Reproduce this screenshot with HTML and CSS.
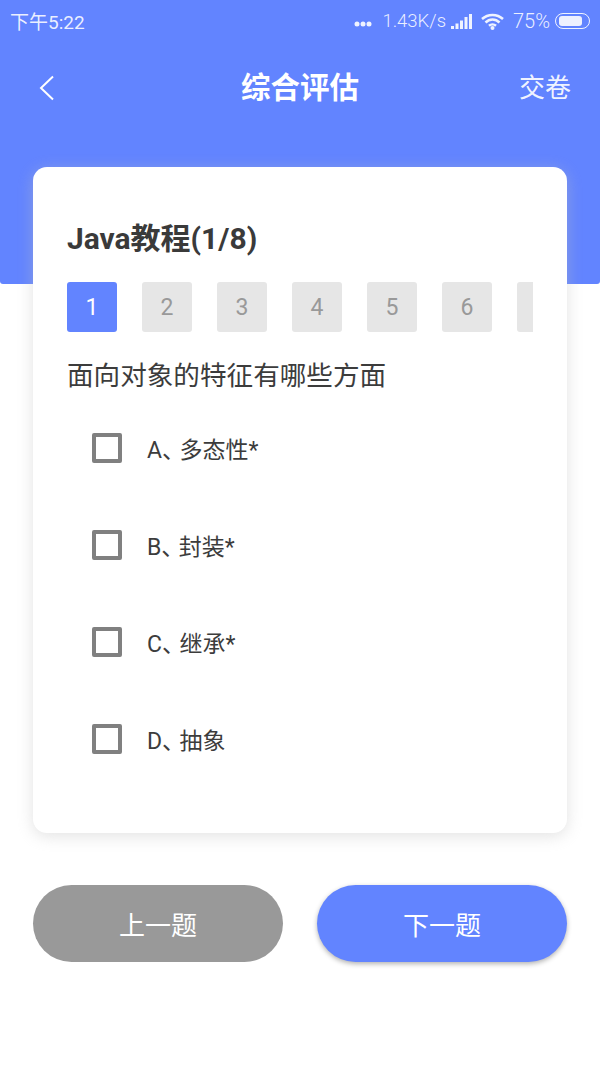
FILE: index.html
```html
<!DOCTYPE html>
<html lang="zh-CN">
	<head>
		<meta charset="UTF-8" />
		<meta name="viewport" content="width=device-width, initial-scale=1.0" />
		<title>综合评估</title>
		<link rel="stylesheet" href="styles.css">
	</head>

	<body>
		<div class="hero">
			<!-- Status bar -->
			<div class="statusBar">
				<span class="time">下午5:22</span>
				<div class="statusRight">
					<svg class="dots" width="18" height="6" viewBox="0 0 18 6"><circle cx="3" cy="3" r="2.500"/><circle cx="9" cy="3" r="2.500"/><circle cx="15" cy="3" r="2.500"/></svg>
					<span class="speed">1.43K/s</span>
					<svg class="signal" width="21" height="15" viewBox="0 0 21 15"><rect x="0" y="12" width="3" height="3"/><rect x="4.500" y="9.500" width="3" height="5.500"/><rect x="9" y="6.500" width="3" height="8.500"/><rect x="13.500" y="3" width="3" height="12"/><rect x="18" y="0" width="3" height="15"/></svg>
					<svg class="wifi" width="23" height="17" viewBox="0 0 23 17"><path d="M1 6 C7 0.500 16 0.500 22 6" /><path d="M4.500 9.500 C8.500 5.500 14.500 5.500 18.500 9.500" /><path d="M8 12.800 C10 11 13 11 15 12.800" /><circle cx="11.500" cy="15" r="2"/></svg>
					<span class="percent">75%</span>
					<div class="battery"><div class="batteryLevel"></div></div>
				</div>
			</div>

			<!-- Title bar -->
			<div class="navBar">
				<svg class="backIcon" width="16" height="26" viewBox="0 0 16 26"><path d="M14 1.500 L2 13 L14 24.500"/></svg>
				<span class="navTitle">综合评估</span>
				<span class="navAction">交卷</span>
			</div>
		</div>

		<div class="card">
			<div class="cardTitle">Java教程(1/8)</div>

			<div class="tabs">
				<div class="tab tabActive">1</div>
				<div class="tab">2</div>
				<div class="tab">3</div>
				<div class="tab">4</div>
				<div class="tab">5</div>
				<div class="tab">6</div>
				<div class="tab"></div>
			</div>

			<div class="question">面向对象的特征有哪些方面</div>

			<div class="options">
				<div class="option"><span class="checkbox"></span><span>A<span class="mark">、</span>多态性*</span></div>
				<div class="option"><span class="checkbox"></span><span>B<span class="mark">、</span>封装*</span></div>
				<div class="option"><span class="checkbox"></span><span>C<span class="mark">、</span>继承*</span></div>
				<div class="option"><span class="checkbox"></span><span>D<span class="mark">、</span>抽象</span></div>
			</div>
		</div>

		<div class="buttons">
			<div class="btn btnPrev">上一题</div>
			<div class="btn btnNext">下一题</div>
		</div>
	</body>
</html>
```

FILE: styles.css
```css
body {
	margin: 0;
	width: 600px;
	height: 1067px;
	overflow: hidden;
	background-color: #fff;
	font-family: Roboto, "Noto Sans CJK SC", sans-serif;
	color: #333;
}

.hero {
	height: 284px;
	background-color: #6284ff;
	color: #fff;
	border-radius: 0 0 3px 3px;
}

.statusBar {
	height: 42px;
	padding: 0 10px;
	display: flex;
	justify-content: space-between;
	align-items: center;
	color: rgba(255, 255, 255, 0.88);
}

.time {
	font-size: 19px;
	padding-bottom: 2px;
}

.statusRight {
	display: flex;
	align-items: center;
}

.statusRight svg {
	fill: rgba(255, 255, 255, 0.9);
}

.dots {
	margin-right: 10px;
	margin-top: 6px;
}

.speed {
	font-size: 18.500px;
	font-weight: 300;
	margin-right: 5px;
}

.signal {
	margin-right: 9px;
}

.wifi {
	margin-right: 9px;
}

.wifi path {
	fill: none;
	stroke: rgba(255, 255, 255, 0.9);
	stroke-width: 2.500;
}

.percent {
	font-size: 20px;
	font-weight: 300;
	margin-right: 5px;
}

.battery {
	width: 35px;
	height: 16px;
	border: 1.500px solid rgba(255, 255, 255, 0.9);
	border-radius: 8px;
	padding: 2px 7px 2px 3px;
	box-sizing: border-box;
	display: flex;
}

.batteryLevel {
	flex: 1;
	background-color: #eef1ff;
	border-radius: 3px;
}

.navBar {
	display: grid;
	grid-template-columns: 1fr auto 1fr;
	align-items: center;
	height: 92px;
	padding: 0 29px 0 39px;
}

.backIcon {
	fill: none;
	stroke: #fff;
	stroke-width: 2;
}

.navTitle {
	font-size: 29.500px;
	font-weight: 700;
	margin-left: -10px;
	padding-bottom: 6px;
}

.navAction {
	font-size: 26px;
	justify-self: end;
	padding-bottom: 5px;
	color: rgba(255, 255, 255, 0.92);
}

.card {
	height: 666px;
	margin: -117px 33px 0;
	padding: 0 34px;
	box-sizing: border-box;
	position: relative;
	background-color: #fff;
	border-radius: 14px;
	box-shadow: 0 3px 16px rgba(190, 190, 190, 0.45);
}

.cardTitle {
	padding-top: 52px;
	font-size: 30px;
	font-weight: 700;
	line-height: 40px;
	color: #3a3a3a;
}

.tabs {
	display: flex;
	gap: 25px;
	margin-top: 23px;
	overflow: hidden;
}

.tab {
	flex: 0 0 50px;
	height: 50px;
	display: flex;
	align-items: center;
	justify-content: center;
	font-size: 23px;
	color: #999;
	background-color: #e6e6e6;
	border-radius: 3px;
}

.tabActive {
	color: #fff;
	background-color: #6284ff;
}

.question {
	margin-top: 26px;
	font-size: 26.600px;
	line-height: 36px;
	color: #3c3c3c;
}

.options {
	margin-top: 39px;
	padding-left: 25px;
	display: flex;
	flex-direction: column;
	gap: 67px;
}

.option {
	height: 30px;
	display: flex;
	align-items: center;
	gap: 25px;
	font-size: 23px;
	color: #3c3c3c;
}

.mark {
	letter-spacing: -5.500px;
}

.checkbox {
	width: 30px;
	height: 30px;
	box-sizing: border-box;
	border: 4px solid #808080;
	border-radius: 2px;
}

.buttons {
	margin: 52px 33px 0;
	display: flex;
	justify-content: space-between;
}

.btn {
	width: 250px;
	height: 77px;
	border-radius: 39px;
	display: flex;
	align-items: center;
	justify-content: center;
	font-size: 26px;
	color: #fff;
}

.btnPrev {
	background-color: #999;
}

.btnNext {
	background-color: #6284ff;
	box-shadow: 0 2px 5px rgba(0, 0, 0, 0.3);
}
```
